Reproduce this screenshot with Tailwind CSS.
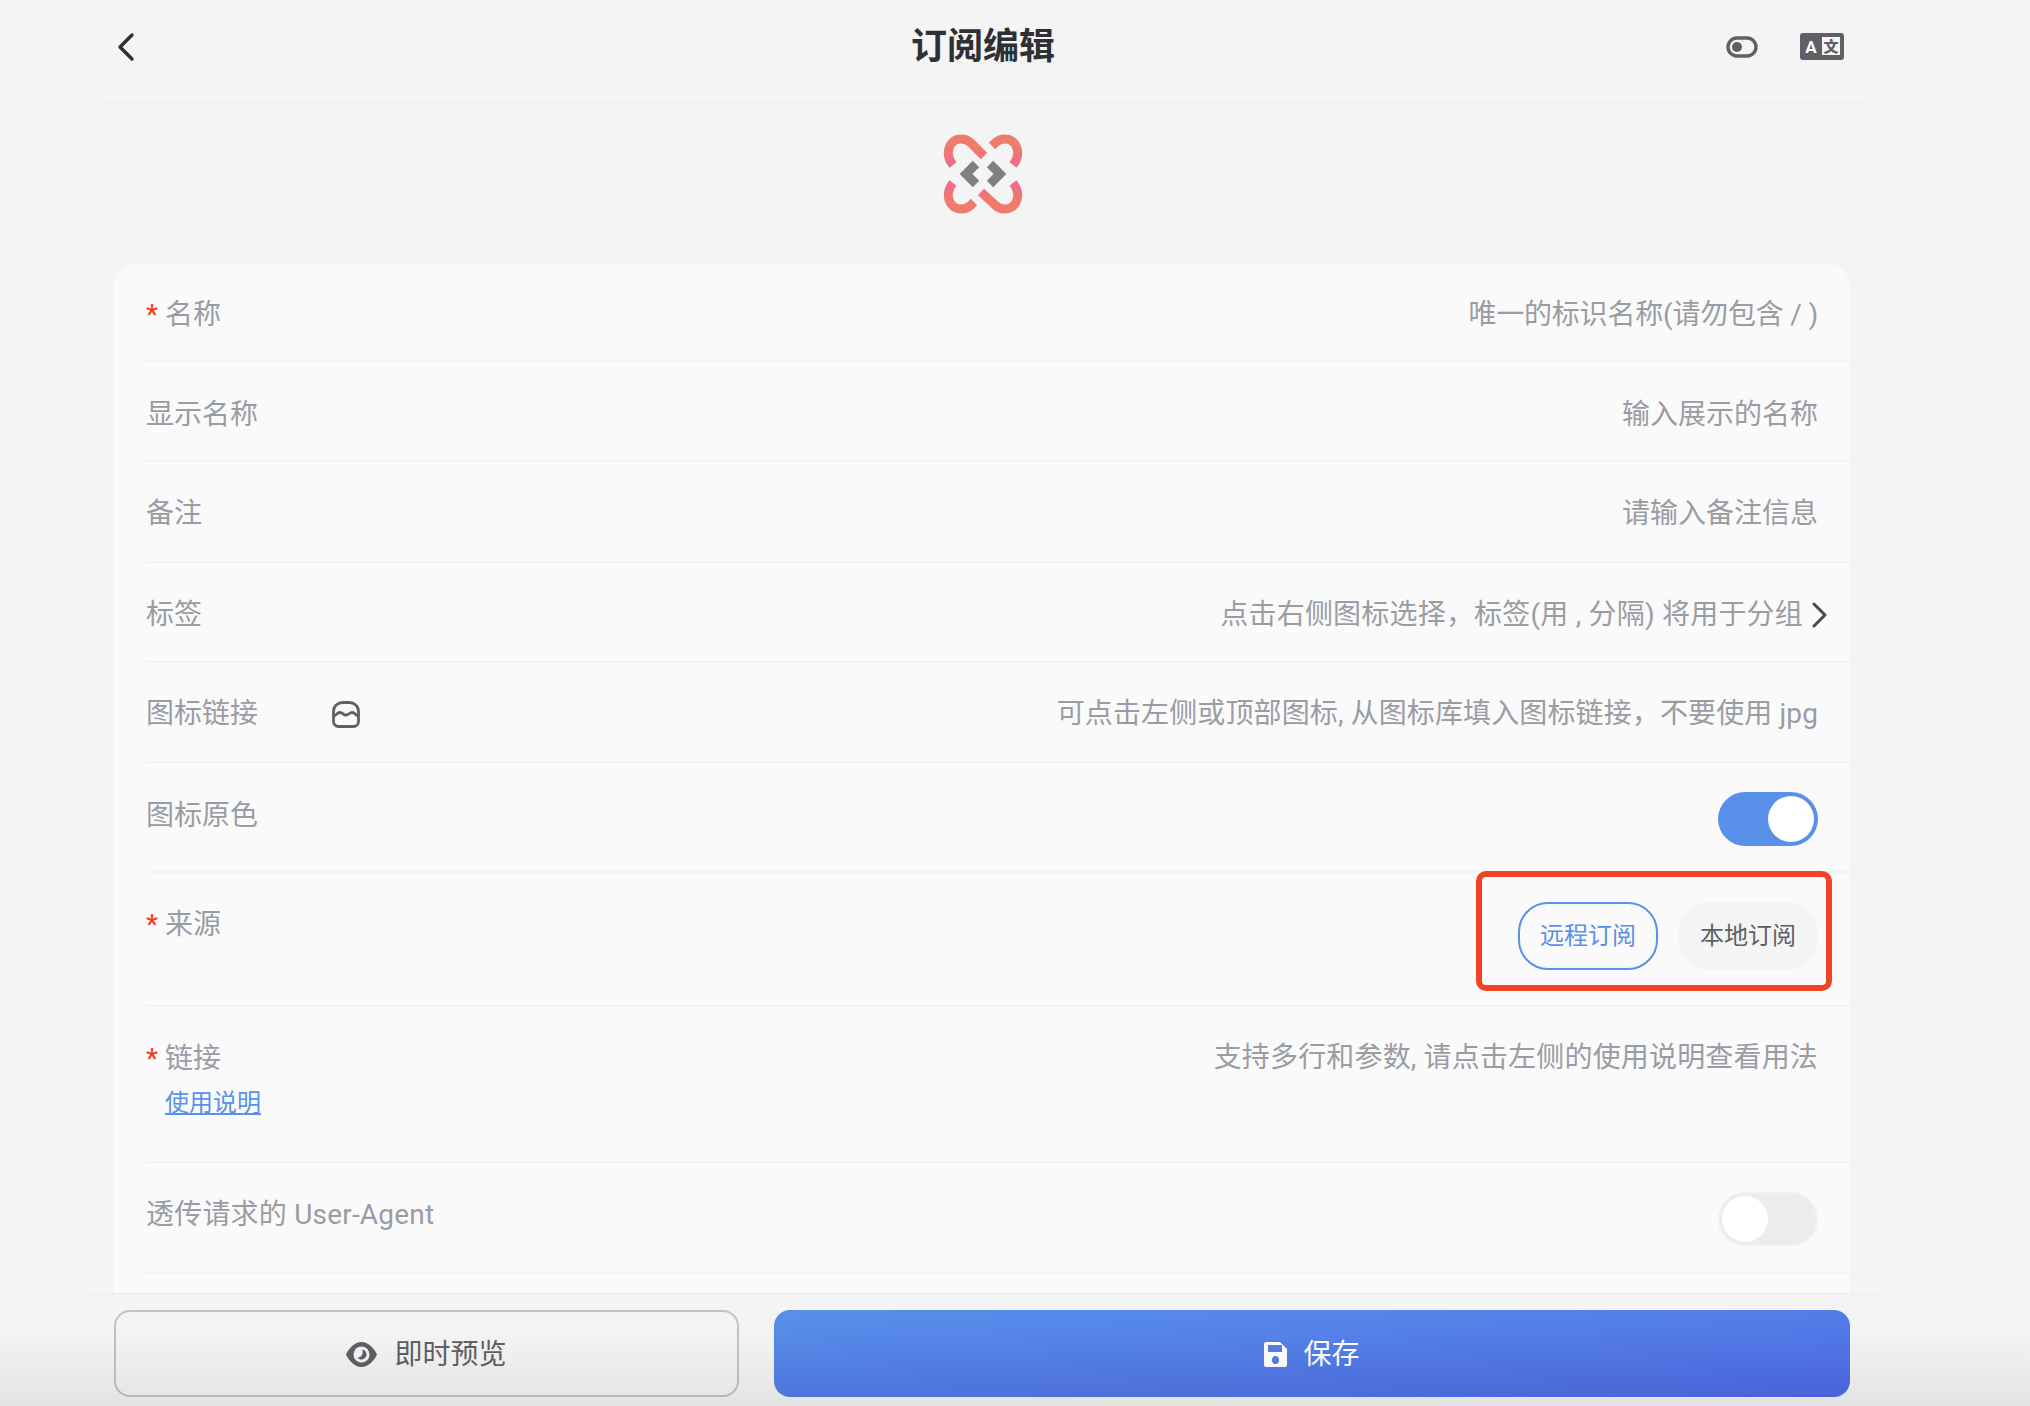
<!DOCTYPE html>
<html lang="zh-CN">
<head>
    <meta charset="UTF-8">
    <meta name="viewport" content="width=device-width, initial-scale=1.0">
    <title>订阅编辑</title>
    <script src="https://cdn.jsdelivr.net/npm/@tailwindcss/browser@4"></script>
</head>
<body class="bg-[#f4f4f4] font-['Roboto','Noto_Sans_CJK_SC',sans-serif] text-[28px] text-[#9a9ca3]">
    <div class="relative h-[1406px] overflow-hidden">
        <div class="ml-[84px] flex h-[1406px] w-[1798px] flex-col">
            <!-- 顶部栏 -->
            <header class="relative flex h-[103px] shrink-0 items-center justify-between rounded-b-[20px] border-b-2 border-[#f0f0f0] pr-[38px] pb-[8px] pl-[32px]">
                <svg class="h-[30px] w-[20px]" viewBox="0 0 20 30" fill="none" stroke="#2f3033" stroke-width="3.4" stroke-linecap="round" stroke-linejoin="round"><path d="M16 3 4 15l12 12"/></svg>
                <h1 class="absolute top-[24px] left-0 w-full text-center text-[36px] leading-[46px] font-bold text-[#2f3033]">订阅编辑</h1>
                <div class="flex items-center gap-[42px]">
                    <svg class="h-[22px] w-[32px]" viewBox="0 0 32 22" fill="none"><rect x="2" y="2" width="28" height="18" rx="9" stroke="#5f6065" stroke-width="3.4"/><circle cx="11" cy="11" r="5" fill="#5f6065"/></svg>
                    <svg class="h-[27px] w-[44px]" viewBox="0 0 44 27"><rect width="44" height="27" rx="3" fill="#5f6065"/><rect x="22" y="4" width="18" height="18" fill="#f4f4f4"/><text x="11" y="19.500" text-anchor="middle" font-size="17" font-weight="700" fill="#fff" font-family="Roboto">A</text><text x="31" y="19" text-anchor="middle" font-size="15" font-weight="900" fill="#5f6065" font-family="Noto Sans CJK SC">文</text></svg>
                </div>
            </header>

            <!-- 图标 -->
            <div class="flex shrink-0 justify-center pt-[31px] pb-[50px]">
                <svg class="size-[80px]" viewBox="0 0 80 80" fill="none" stroke-width="9">
                    <defs>
                        <linearGradient id="logoGrad" gradientUnits="userSpaceOnUse" x1="0" y1="0" x2="0" y2="80">
                            <stop offset="0" stop-color="#ee7b6b"/>
                            <stop offset="0.16" stop-color="#ee7b6b"/>
                            <stop offset="0.4" stop-color="#ec6c8c"/>
                            <stop offset="0.6" stop-color="#ec6c8c"/>
                            <stop offset="0.84" stop-color="#ee7b6b"/>
                            <stop offset="1" stop-color="#ee7b6b"/>
                        </linearGradient>
                    </defs>
                    <path stroke="url(#logoGrad)" d="M10 31C1 20 6 5 18 5c4 0 7 1 10 4l13 13"/>
                    <path stroke="url(#logoGrad)" d="M70 31c9-11 4-26-8-26-4 0-7 1-10 4l-3 3"/>
                    <path stroke="url(#logoGrad)" d="M10 49c-9 11-4 26 8 26 4 0 7-1 10-4l3-3"/>
                    <path stroke="url(#logoGrad)" d="M70 49c9 11 4 26-8 26-4 0-7-1-10-4L38 58"/>
                    <path stroke="#808080" d="M33 30 23 40l10 10"/>
                    <path stroke="#808080" d="M47 30l10 10-10 10"/>
                </svg>
            </div>

            <!-- 表单 -->
            <main class="mr-[32px] ml-[30px] min-h-0 flex-1 overflow-hidden rounded-t-[22px] bg-[#fafafa] pl-[32px]">
                <div class="flex h-[98px] items-center justify-between border-b-2 border-[#f3f3f3] pt-[6px] pr-[32px]">
                    <span><span class="inline-block w-[19px] text-[#ee3b24]">*</span>名称</span>
                    <span class="tracking-[-0.2px]">唯一的标识名称(请勿包含 / )</span>
                </div>
                <div class="flex h-[100px] items-center justify-between border-b-2 border-[#f3f3f3] pt-[8px] pr-[32px]">
                    <span>显示名称</span>
                    <span>输入展示的名称</span>
                </div>
                <div class="flex h-[101px] items-center justify-between border-b-2 border-[#f3f3f3] pt-[4px] pr-[32px]">
                    <span>备注</span>
                    <span>请输入备注信息</span>
                </div>
                <div class="flex h-[100px] items-center justify-between border-b-2 border-[#f3f3f3] pt-[6px] pr-[22px]">
                    <span>标签</span>
                    <span class="flex items-center gap-[8px] tracking-[0.2px]">点击右侧图标选择，标签(用 , 分隔) 将用于分组
                        <svg class="h-[26px] w-[17px]" viewBox="0 0 17 26" fill="none" stroke="#4a4b4f" stroke-width="3" stroke-linecap="round" stroke-linejoin="round"><path d="M3 2l11 11L3 24"/></svg>
                    </span>
                </div>
                <div class="flex h-[100px] items-center justify-between border-b-2 border-[#f3f3f3] pt-[4px] pr-[32px]">
                    <span class="flex items-center">
                        <span class="w-[186px]">图标链接</span>
                        <svg class="h-[27px] w-[28px]" viewBox="0 0 28 27" fill="none" stroke="#5f6065" stroke-width="2.800" stroke-linejoin="round"><path d="M11 1.500h6c5.500 0 9.500 3.500 9.500 9v10c0 2.800-2.200 5-5 5h-15c-2.800 0-5-2.200-5-5v-10c0-5.500 4-9 9.500-9Z"/><path d="M1.500 15c3 0 3-3.500 6.300-3.500S11 14 14 14s3-2.500 6.200-2.500 3.300 3.500 6.300 3.500"/></svg>
                    </span>
                    <span class="tracking-[0.12px]">可点击左侧或顶部图标, 从图标库填入图标链接，不要使用 jpg</span>
                </div>
                <div class="flex h-[110px] items-start justify-between border-b-2 border-[#f3f3f3] pr-[32px]">
                    <span class="pt-[32px] leading-[42px]">图标原色</span>
                    <span class="mt-[29px] flex h-[54px] w-[100px] justify-end rounded-full bg-[#5890ea] p-[4px]"><span class="size-[46px] rounded-full bg-white"></span></span>
                </div>
                <div class="flex h-[134px] items-start justify-between border-b-2 border-[#f3f3f3] pr-[32px]">
                    <span class="pt-[31px] leading-[42px]"><span class="inline-block w-[19px] text-[#ee3b24]">*</span>来源</span>
                    <div class="flex gap-[20px] pt-[29px] text-[24px] leading-[34px]">
                        <span class="flex h-[68px] w-[140px] items-center justify-center rounded-[30px] border-2 border-[#5890ea] text-[#5890ea]">远程订阅</span>
                        <span class="flex h-[68px] w-[140px] items-center justify-center rounded-[30px] bg-[#f4f4f4] text-[#5f6065]">本地订阅</span>
                    </div>
                </div>
                <div class="flex h-[156px] items-start justify-between border-b-2 border-[#f3f3f3] pr-[32px]">
                    <div class="pt-[31px] leading-[42px]">
                        <div><span class="inline-block w-[19px] text-[#ee3b24]">*</span>链接</div>
                        <a class="ml-[19px] block pt-[5px] text-[24px] leading-[36px] text-[#5890ea] underline">使用说明</a>
                    </div>
                    <span class="pt-[30px] leading-[42px] tracking-[0.17px]">支持多行和参数, 请点击左侧的使用说明查看用法</span>
                </div>
                <div class="flex h-[111px] items-start justify-between border-b-2 border-[#f3f3f3] pr-[32px]">
                    <span class="pt-[31px] leading-[42px] tracking-[0.2px]">透传请求的 User-Agent</span>
                    <span class="mt-[29px] flex h-[54px] w-[100px] rounded-full border-2 border-[#f0f0f0] bg-[#ececec] p-[2px]"><span class="size-[46px] rounded-full bg-white"></span></span>
                </div>
            </main>

            <!-- 底部按钮 -->
            <footer class="flex h-[113px] shrink-0 gap-[35px] border-t-2 border-[#f0f0f0] pr-[32px] pl-[30px] pt-[15px]">
                <button class="flex h-[87px] w-[625px] items-center justify-center gap-[17px] rounded-[16px] border-2 border-[#bfc2c7] pt-[2px] text-[#5f6065]">
                    <svg class="h-[25px] w-[31px]" viewBox="0 0 31 25"><path fill="#5f6065" fill-rule="evenodd" d="M15.500 0C22 0 28 6 31 12.500 28 19 22 25 15.500 25S3 19 0 12.500C3 6 9 0 15.500 0Zm0 4.500a8 8 0 1 0 0 16 8 8 0 0 0 0-16Zm0 3a5 5 0 1 1-3.800 8.200 5.500 5.500 0 0 0 4.300-8.200h-.5Z"/></svg>
                    即时预览
                </button>
                <button class="flex h-[87px] flex-1 items-center justify-center gap-[16px] rounded-[16px] bg-gradient-to-br from-[#5890ea] to-[#4f69e6] pt-[2px] text-white">
                    <svg class="h-[25px] w-[23px]" viewBox="0 0 23 25"><path fill="#fff" fill-rule="evenodd" d="M2 0h14l7 7v16a2 2 0 0 1-2 2H2a2 2 0 0 1-2-2V2a2 2 0 0 1 2-2Zm2 3v7h14V3H4Zm7.500 11a3.500 4 0 1 0 0 8 3.500 4 0 0 0 0-8Z"/></svg>
                    保存
                </button>
            </footer>
        </div>

        <!-- 红色标注框 -->
        <div class="pointer-events-none absolute top-[871px] left-[1476px] h-[120px] w-[356px] rounded-[10px] border-[6px] border-[#ee4326]"></div>
        <!-- 底部阴影 -->
        <div class="pointer-events-none absolute bottom-0 left-0 h-[76px] w-full bg-gradient-to-b from-transparent to-black/7"></div>
    </div>
</body>
</html>
